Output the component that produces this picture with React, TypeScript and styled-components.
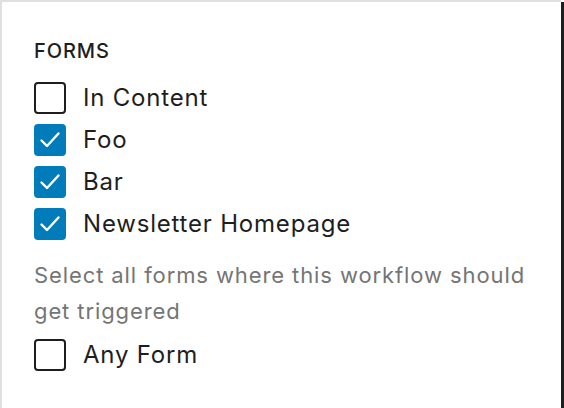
import React from "react"
import styled, { createGlobalStyle } from "styled-components"

const GlobalStyle = createGlobalStyle`
  html, body {
    margin: 0;
    padding: 0;
    background: #fff;
  }
  body {
    font-family: Inter, "Liberation Sans", sans-serif;
    color: #1e1e1e;
  }
`

type FormOption = {
  label: string
  checked: boolean
}

const options: FormOption[] = [
  { label: "In Content", checked: false },
  { label: "Foo", checked: true },
  { label: "Bar", checked: true },
  { label: "Newsletter Homepage", checked: true },
]

const Checkbox = ({ checked }: { checked: boolean }) => (
  <Box $checked={checked}>
    {checked && (
      <svg width="32" height="32" viewBox="0 0 32 32" fill="none">
        <path
          d="M7.5 16.5 L13 22 L24.5 9.5"
          stroke="#fff"
          strokeWidth="2.4"
          strokeLinecap="round"
          strokeLinejoin="round"
        />
      </svg>
    )}
  </Box>
)

const Option = ({ label, checked }: FormOption) => (
  <Row>
    <Checkbox checked={checked} />
    <Label>{label}</Label>
  </Row>
)

const App = () => {
  return (
    <>
      <GlobalStyle />
      <Frame>
        <Panel>
          <Heading>Forms</Heading>
          <List>
            {options.map((o) => (
              <Option key={o.label} {...o} />
            ))}
          </List>
          <Help>Select all forms where this workflow should get triggered</Help>
          <Option label="Any Form" checked={false} />
        </Panel>
        <Edge />
      </Frame>
    </>
  )
}

export default App

const Frame = styled.div`
  display: flex;
  width: 564px;
  height: 408px;
  overflow: hidden;
`

const Panel = styled.section`
  flex: 1;
  display: flex;
  flex-direction: column;
  border-top: 2px solid #e0e0e0;
  border-left: 2px solid #e0e0e0;
  padding: 37px 32px 0 32px;
`

const Edge = styled.div`
  width: 3px;
  margin-top: 2px;
  background: #1e1e1e;
`

const Heading = styled.h2`
  margin: 0 0 19px;
  font-size: 20px;
  line-height: 24px;
  font-weight: 500;
  letter-spacing: 0.9px;
  text-transform: uppercase;
`

const List = styled.div`
  display: flex;
  flex-direction: column;
  gap: 10px;
`

const Row = styled.label`
  display: flex;
  align-items: center;
  gap: 17px;
  height: 32px;
`

const Box = styled.span<{ $checked: boolean }>`
  box-sizing: border-box;
  width: 32px;
  height: 32px;
  flex: none;
  border-radius: 4px;
  border: 2.5px solid ${(p) => (p.$checked ? "#007cba" : "#1e1e1e")};
  background: ${(p) => (p.$checked ? "#007cba" : "#fff")};
  display: flex;
  align-items: center;
  justify-content: center;

  svg {
    flex: none;
  }
`

const Label = styled.span`
  font-size: 24px;
  line-height: 32px;
  letter-spacing: 0.8px;
`

const Help = styled.p`
  margin: 17px 0 10px;
  font-size: 22px;
  line-height: 36px;
  letter-spacing: 0.9px;
  color: #757575;
`
